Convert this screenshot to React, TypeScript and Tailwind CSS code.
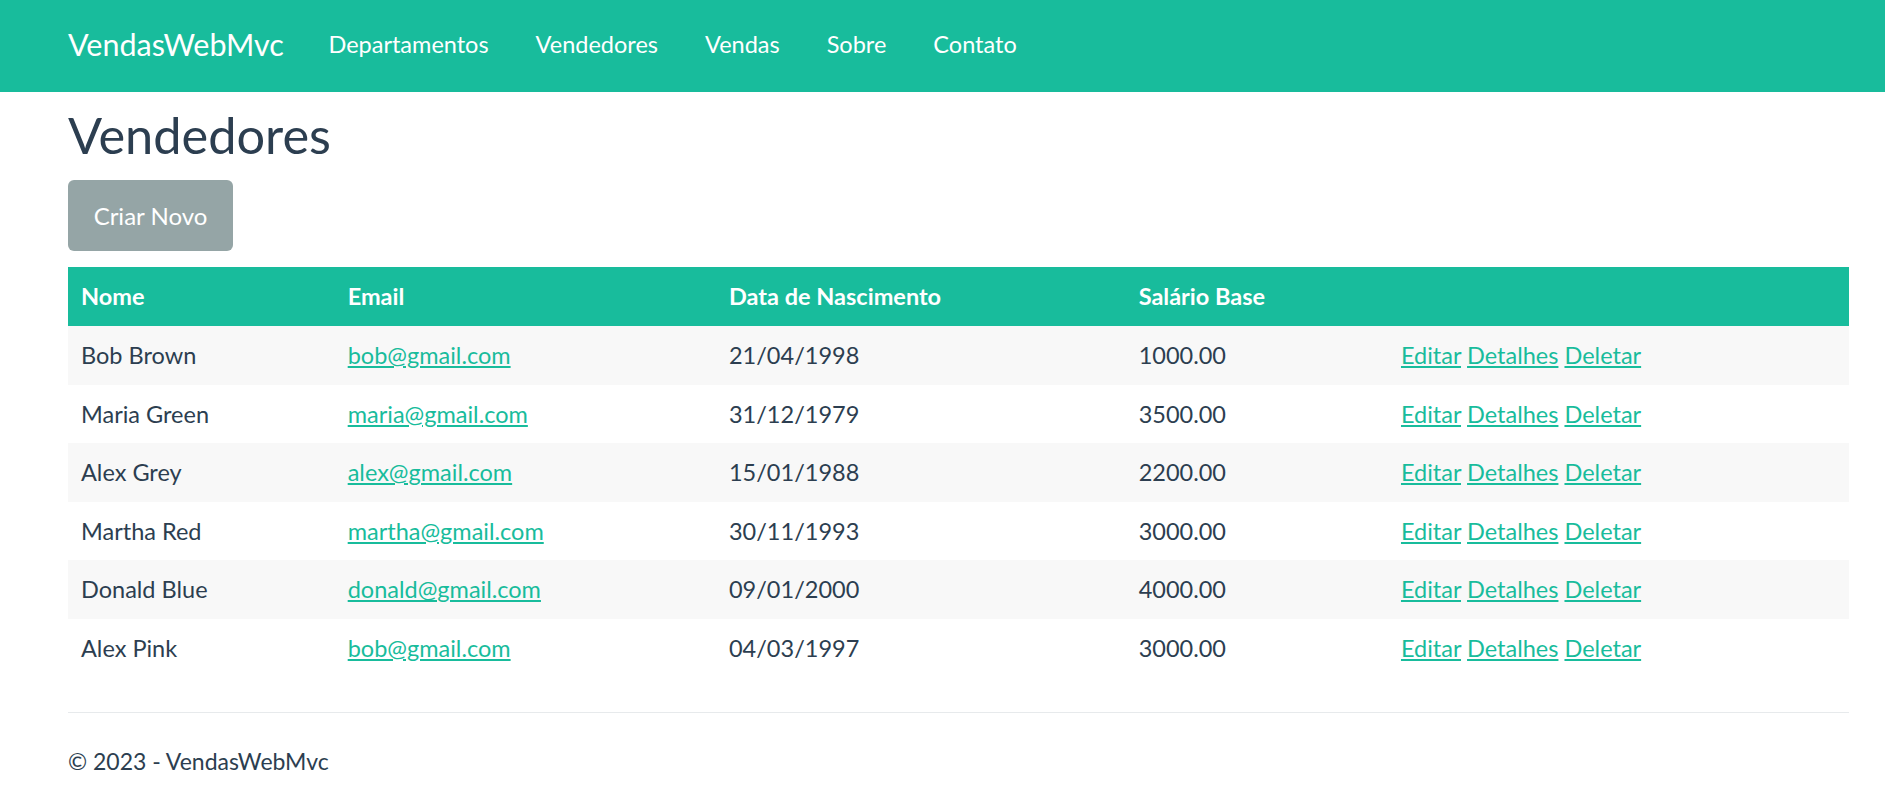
import React from "react";

const sellers = [
  { name: "Bob Brown", email: "bob@gmail.com", birth: "21/04/1998", salary: "1000.00" },
  { name: "Maria Green", email: "maria@gmail.com", birth: "31/12/1979", salary: "3500.00" },
  { name: "Alex Grey", email: "alex@gmail.com", birth: "15/01/1988", salary: "2200.00" },
  { name: "Martha Red", email: "martha@gmail.com", birth: "30/11/1993", salary: "3000.00" },
  { name: "Donald Blue", email: "donald@gmail.com", birth: "09/01/2000", salary: "4000.00" },
  { name: "Alex Pink", email: "bob@gmail.com", birth: "04/03/1997", salary: "3000.00" },
];

const navLinks = ["Departamentos", "Vendedores", "Vendas", "Sobre", "Contato"];

export default function App() {
  return (
    <div className="min-h-screen bg-white text-[#2c3e50] font-['Lato','Liberation_Sans',sans-serif] text-[23.5px] leading-[1.5]">
      {/* navbar */}
      <nav className="bg-[#18bc9c] h-[92px] flex items-center pl-[68px] pb-[2px]">
        <a className="text-white text-[30.5px] mr-[21px] leading-[1.5]">VendasWebMvc</a>
        <ul className="flex items-center">
          {navLinks.map((l) => (
            <li key={l}>
              <a className="text-white px-[23.5px]">{l}</a>
            </li>
          ))}
        </ul>
      </nav>

      <main className="pl-[68px] pr-[36px]">
        <h2 className="text-[50.5px] leading-[1.2] mt-[12.5px] mb-[15px] font-normal">Vendedores</h2>

        <button className="bg-[#95a5a6] text-white text-[24px] rounded-[6px] w-[165px] h-[71px] flex items-center justify-center">
          Criar Novo
        </button>

        {/* tabela */}
        <table className="w-full table-fixed mt-[16px] border-collapse">
          <colgroup>
            <col className="w-[266.7px]" />
            <col className="w-[381.3px]" />
            <col className="w-[409.7px]" />
            <col className="w-[262.3px]" />
            <col />
          </colgroup>
          <thead>
            <tr className="bg-[#18bc9c] text-white text-left">
              <th className="pl-[13px] pr-[12px] py-[12px] leading-[35px] font-bold">Nome</th>
              <th className="pl-[13px] pr-[12px] py-[12px] leading-[35px] font-bold">Email</th>
              <th className="pl-[13px] pr-[12px] py-[12px] leading-[35px] font-bold">Data de Nascimento</th>
              <th className="pl-[13px] pr-[12px] py-[12px] leading-[35px] font-bold">Salário Base</th>
              <th className="pl-[13px] pr-[12px] py-[12px] leading-[35px]"></th>
            </tr>
          </thead>
          <tbody>
            {sellers.map((s, i) => (
              <tr key={i} className={i % 2 === 0 ? "bg-[#f8f8f8]" : "bg-white"}>
                <td className="pl-[13px] pr-[12px] py-[12px] leading-[34.6px]">{s.name}</td>
                <td className="pl-[13px] pr-[12px] py-[12px] leading-[34.6px]">
                  <a className="text-[#18bc9c] underline">{s.email}</a>
                </td>
                <td className="pl-[13px] pr-[12px] py-[12px] leading-[34.6px]">{s.birth}</td>
                <td className="pl-[13px] pr-[12px] py-[12px] leading-[34.6px]">{s.salary}</td>
                <td className="pl-[13px] pr-[12px] py-[12px] leading-[34.6px]">
                  <a className="text-[#18bc9c] underline">Editar</a>{" "}
                  <a className="text-[#18bc9c] underline">Detalhes</a>{" "}
                  <a className="text-[#18bc9c] underline">Deletar</a>
                </td>
              </tr>
            ))}
          </tbody>
        </table>

        {/* rodapé */}
        <footer className="mt-[34.5px] border-t border-[#e7eaec] pt-[31px]">
          <p className="text-[23px] leading-[34px]">© 2023 - VendasWebMvc</p>
        </footer>
      </main>
    </div>
  );
}
